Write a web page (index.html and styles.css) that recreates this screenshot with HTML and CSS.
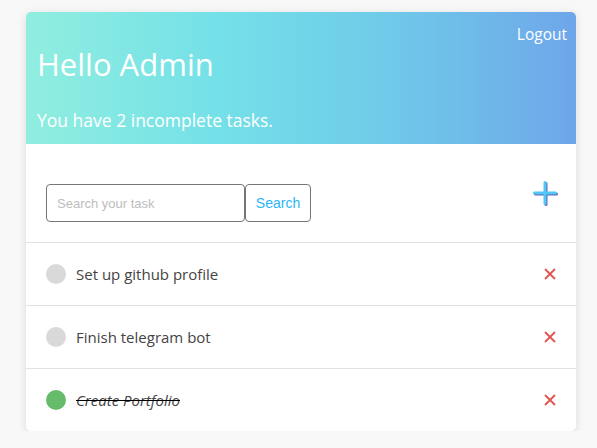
FILE: index.html
```html
<!DOCTYPE html>
<html>
<head>
<meta charset="utf-8">
<link rel="stylesheet" href="styles.css">
</head>
<body>
<div class="card">
  <header class="head">
    <a class="logout">Logout</a>
    <h1 class="hello">Hello Admin</h1>
    <p class="count">You have 2 incomplete tasks.</p>
  </header>
  <div class="toolbar">
    <form class="search">
      <input class="search-input" type="text" placeholder="Search your task">
      <button class="search-btn" type="button">Search</button>
    </form>
    <svg class="add" width="26" height="26" viewBox="0 0 26 26">
      <g stroke="#6a5fb8" stroke-width="3" stroke-linecap="round" transform="translate(1,1)">
        <line x1="12" y1="1.5" x2="12" y2="22.5"/>
        <line x1="1.5" y1="12" x2="22.5" y2="12"/>
      </g>
      <g stroke="#4fc8f5" stroke-width="3" stroke-linecap="round">
        <line x1="12" y1="1.5" x2="12" y2="22.5"/>
        <line x1="1.5" y1="12" x2="22.5" y2="12"/>
      </g>
    </svg>
  </div>
  <ul class="tasks">
    <li class="task"><span class="dot"></span><span class="name">Set up github profile</span><svg class="del" width="12" height="12" viewBox="0 0 12 12"><path d="M1 1L11 11M11 1L1 11" stroke="#e0534f" stroke-width="1.8"/></svg></li>
    <li class="task"><span class="dot"></span><span class="name">Finish telegram bot</span><svg class="del" width="12" height="12" viewBox="0 0 12 12"><path d="M1 1L11 11M11 1L1 11" stroke="#e0534f" stroke-width="1.8"/></svg></li>
    <li class="task done"><span class="dot"></span><span class="name">Create Portfolio</span><svg class="del" width="12" height="12" viewBox="0 0 12 12"><path d="M1 1L11 11M11 1L1 11" stroke="#e0534f" stroke-width="1.8"/></svg></li>
  </ul>
</div>
</body>
</html>
```
FILE: styles.css
```css
html, body { margin: 0; padding: 0; }
body {
  background: #f8f8f8;
  font-family: "Open Sans", "Lato", sans-serif;
  padding: 12px 21px 0 26px;
}
.card {
  width: 550px;
  background: #fff;
  border-radius: 5px;
  box-shadow: 0 2px 10px rgba(0,0,0,0.12);
  overflow: hidden;
}
.head {
  position: relative;
  height: 132px;
  box-sizing: border-box;
  padding: 32px 11px 0 11px;
  background: linear-gradient(to right, #90eedf 0%, #74e0e8 35%, #6fcbe9 65%, #6ea6ea 100%);
  color: #fff;
}
.logout {
  position: absolute;
  top: 11px;
  right: 9px;
  font-size: 15.5px;
}
.hello {
  margin: 0;
  font-weight: 400;
  font-size: 31px;
  line-height: 40px;
}
.count {
  margin: 25px 0 0 0;
  font-size: 17.5px;
  line-height: 22px;
}
.toolbar {
  display: flex;
  align-items: center;
  justify-content: space-between;
  height: 98px;
  padding: 0 20px;
  border-bottom: 1px solid #dee2e6;
}
.search { display: flex; margin-top: 20px; }
.search-input {
  width: 199px;
  height: 38px;
  box-sizing: border-box;
  border: 1px solid #767676;
  border-radius: 4px;
  padding: 0 10px;
  font-family: "Liberation Sans", Arial, sans-serif;
  font-size: 13px;
}
.search-input::placeholder { color: #bdbdbd; }
.search-btn {
  height: 38px;
  width: 66px;
  box-sizing: border-box;
  background: #fff;
  border: 1px solid #767676;
  border-radius: 4px;
  color: #29b6f6;
  font-family: "Liberation Sans", Arial, sans-serif;
  font-size: 14px;
  padding: 0;
}
.add {
  margin-right: -3px;
  margin-top: 1px;
}
.tasks { list-style: none; margin: 0; padding: 0; }
.task {
  display: flex;
  align-items: center;
  height: 62px;
  padding: 0 20px;
  border-bottom: 1px solid #dee2e6;
  color: #444;
  font-size: 15px;
}
.task:last-child { border-bottom: 0; }
.dot {
  width: 20px;
  height: 20px;
  border-radius: 50%;
  background: #d9d9d9;
  margin-right: 10px;
}
.done .dot { background: #66bb6a; }
.done .name { font-style: italic; text-decoration: line-through; text-decoration-color: #000; }
.name { flex: 1; }
.del { margin-right: 0; }
```
